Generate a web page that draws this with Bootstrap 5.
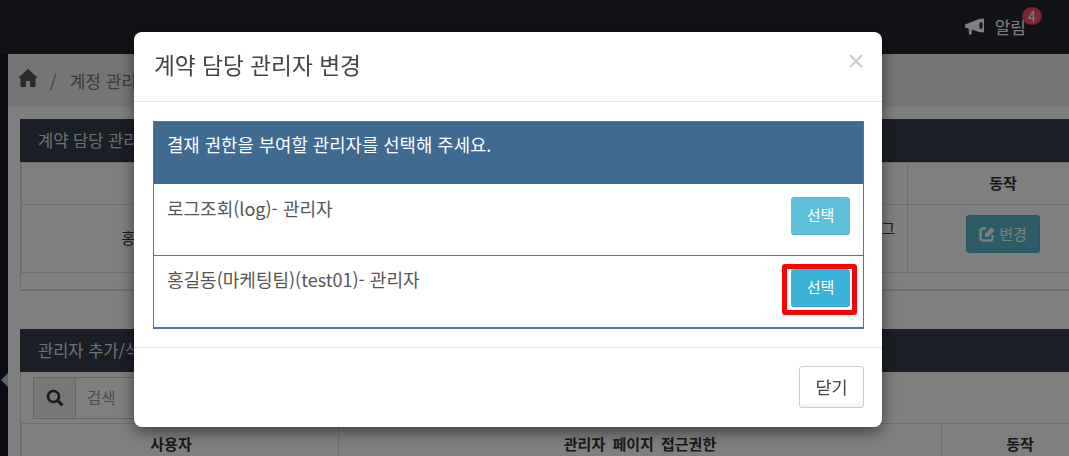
<!DOCTYPE html>
<html lang="ko">
<head>
    <meta charset="UTF-8">
    <meta name="viewport" content="width=device-width, initial-scale=1.0">
    <title>계약 담당 관리자 변경</title>
    <link href="https://cdn.jsdelivr.net/npm/bootstrap@5.3.2/dist/css/bootstrap.min.css" rel="stylesheet">
    <style>
        html, body { height: 100%; overflow: hidden; }
        body { font-family: "Noto Sans CJK KR", "Noto Sans", sans-serif; font-size: 15px; color: #333; background: #fff; }

        .top-bar { height: 54px; background: #24262f; padding: 0 43px 0 0; }
        .alarm-link { position: relative; color: #fff; font-size: 17px; gap: 10px; padding-bottom: 1px; }
        .alarm-badge { position: absolute; top: -7px; right: -16px; width: 20px; height: 18px; line-height: 18px; padding: 0; border-radius: 50%; background: #f05068; font-size: 14px; font-weight: 400; }

        .page-wrap { height: 402px; }
        .side-strip { width: 8px; background: #181c28; flex: none; position: relative; }
        .side-arrow { position: absolute; left: 1px; top: 319px; width: 0; height: 0; border-top: 7px solid transparent; border-bottom: 7px solid transparent; border-right: 7px solid #a9cde8; }
        .main-area { overflow: hidden; background: #fff; }

        .crumb-bar { height: 53px; background: #eaeaea; padding: 0 10px; gap: 12px; color: #777; font-size: 17px; margin-bottom: 12px; white-space: nowrap; }
        .crumb-bar svg { flex: none; margin-bottom: 5px; }
        .crumb-sep { margin-right: 1px; }

        .box-panel { margin: 0 -30px 38px 12px; border: 0; border-left: 1px solid #ddd; border-bottom: 2px solid #ddd; padding-bottom: 16px; border-radius: 0; background: #fff; }
        .box-panel .card-header { height: 43px; margin-left: -1px; background: #343e4e; color: #e0e0e0; font-size: 16.5px; border: 0; border-radius: 0; padding: 0 18px; line-height: 42px; }
        .box-table { margin: 0; table-layout: fixed; border-color: #ddd; text-align: center; color: #333; }
        .box-table th { height: 42px; vertical-align: middle; padding: 0 8px; font-weight: 700; font-size: 15px; word-spacing: 3px; }
        .box-table td { height: 68px; vertical-align: middle; padding: 0 8px; }
        .box-table .cell-log { vertical-align: top; text-align: right; padding: 12px 12px 0 0; }
        .box-table .cell-act { vertical-align: top; padding-top: 10px; }
        .box-table .th-user { padding-right: 26px; }
        .w-name { width: 294px; }
        .w-mid { width: 376px; }
        .w-log { width: 216px; }
        .w-user { width: 317px; }
        .w-auth { width: 603px; }

        .edit-btn { background: #5ab8d0; border-color: #4aa8c4; color: #fff; width: 74px; height: 38px; padding: 0; font-size: 15px; border-radius: 3px; gap: 3px; }

        .search-row { margin: 5px 0 4px 12px; width: 330px; height: 42px; }
        .search-row .input-group-text { width: 43px; background: #eee; border-color: #ccc; border-radius: 0; padding: 0; justify-content: center; }
        .search-row .form-control { border-color: #ccc; border-radius: 0; font-size: 15.5px; padding-left: 11px; }
        .search-row .form-control::placeholder { color: #999; }
        .panel-second { padding-bottom: 0; border-bottom: 0; }
        .panel-second .box-table { border-top: 1px solid #ddd; }

        .picker-dialog { max-width: 748px; width: 748px; margin: 32px 0 0 134px; }
        .picker-content { height: 395px; border: 0; border-radius: 8px; box-shadow: 0 5px 15px rgba(0,0,0,.5); }
        .picker-content .modal-header { height: 70px; padding: 0 19px 0 20px; border-bottom: 1px solid #e5e5e5; align-items: flex-start; }
        .picker-title { font-size: 22.7px; line-height: 66px; font-weight: 400; color: #444; }
        .close-x { background: none; border: 0; padding: 0; margin-top: 14px; margin-right: 0; line-height: 1; height: 28px; }
        .picker-body { padding: 19px 18px 0 19px; height: 245px; flex: none; }
        .picker-panel { --bs-card-border-color: #4a7aa3; border: 1px solid #4a7aa3; border-bottom-width: 2px; border-radius: 0; }
        .picker-panel .card-header { height: 62px; background: #406a90; color: #fff; border: 0; border-radius: 0; padding: 10px 13px; font-size: 17.8px; line-height: 24px; }
        .list-group-flush > .picker-row { height: 72px; padding: 13px 13px 0 13px; border: 0; border-top: 1px solid #4a7aa3; border-radius: 0; color: #555; font-size: 18px; line-height: 24px; }
        .list-group-flush > .picker-row > span:first-child { margin-top: -2px; }
        .list-group-flush > .picker-row:first-child { border-top: 0; height: 71px; }
        .list-group-flush > .picker-row:first-child > span:first-child { margin-top: -1px; }
        .pick-hold { position: relative; display: inline-block; line-height: 0; }
        .pick-btn { width: 59px; height: 38px; padding: 0; font-size: 15px; color: #fff; border: 0; border-bottom: 1px solid #2aa0c4; border-radius: 3px; background: #39b3d7; }
        .pick-btn-soft { background: #5fc0dc; border-bottom-color: #4fb0cc; }
        .pick-mark { position: absolute; left: -9px; right: -7px; top: 0; bottom: -8px; margin-top: -5px; border: 5px solid #f00; border-radius: 3px; pointer-events: none; }
        .picker-content .modal-footer { height: 81px; padding: 0 18px 0 0; border-top: 1px solid #e5e5e5; align-items: flex-start; margin-top: 0; }
        .done-btn { width: 65px; height: 42px; margin: 18px 0 0; padding: 0; font-size: 17.5px; color: #444; background: linear-gradient(#fff 85%, #f0f0f0); border: 1px solid #ccc; border-radius: 3px; }
    </style>
</head>
<body>

<nav class="navbar top-bar justify-content-end">
    <a class="alarm-link d-flex align-items-center text-decoration-none" href="#">
        <svg width="20" height="18" viewBox="0 0 20 18" fill="#fff">
            <path d="M0 6.5 L14 1 L19 0.5 L19 14.5 L14 14 L7 11.5 L6.5 16.5 L4 16.5 L3.6 10.5 L0 9.5 Z"/>
            <ellipse cx="16" cy="7.5" rx="1.6" ry="3.6" fill="#24262f"/>
        </svg>
        <span>알림</span>
        <span class="badge alarm-badge">4</span>
    </a>
</nav>

<div class="page-wrap d-flex">
    <div class="side-strip"><span class="side-arrow"></span></div>
    <div class="main-area flex-grow-1">
        <div class="crumb-bar d-flex align-items-center">
            <svg width="20" height="18" viewBox="0 0 20 18" fill="#555">
                <path d="M10 0 L20 9 L17.5 9 L17.5 18 L12 18 L12 12 L8 12 L8 18 L2.5 18 L2.5 9 L0 9 Z"/>
            </svg>
            <span class="crumb-sep">/</span>
            <span>계정 관리</span>
        </div>

        <div class="card box-panel">
            <div class="card-header">계약 담당 관리자</div>
            <table class="table table-bordered box-table">
                <colgroup><col class="w-name"><col class="w-mid"><col class="w-log"><col></colgroup>
                <thead><tr><th>사용자</th><th>부서</th><th>권한</th><th>동작</th></tr></thead>
                <tbody>
                    <tr>
                        <td>홍길동(test01)</td>
                        <td>마케팅팀</td>
                        <td class="cell-log">접속 로그</td>
                        <td class="cell-act">
                            <button class="btn edit-btn d-inline-flex align-items-center justify-content-center">
                                <svg width="17" height="16" viewBox="0 0 17 16">
                                    <path d="M7 2.5 H4 A2.5 2.5 0 0 0 1.5 5 V12 A2.5 2.5 0 0 0 4 14.5 H11 A2.5 2.5 0 0 0 13.5 12 V9" fill="none" stroke="#fff" stroke-width="2.4"/>
                                    <path d="M6 8 L12.5 1.2 L15.8 4.4 L9 11 L6 11 Z" fill="#fff"/>
                                </svg>
                                변경
                            </button>
                        </td>
                    </tr>
                </tbody>
            </table>
        </div>

        <div class="card box-panel panel-second">
            <div class="card-header">관리자 추가/삭제</div>
            <div class="input-group search-row">
                <span class="input-group-text">
                    <svg width="18" height="18" viewBox="0 0 18 18" fill="none" stroke="#333">
                        <circle cx="7.5" cy="7.5" r="5.5" stroke-width="2.6"/>
                        <path d="M11.5 11.5 L16.5 16.5" stroke-width="3"/>
                    </svg>
                </span>
                <input class="form-control" type="text" placeholder="검색">
            </div>
            <table class="table table-bordered box-table">
                <colgroup><col class="w-user"><col class="w-auth"><col></colgroup>
                <thead><tr><th class="th-user">사용자</th><th>관리자 페이지 접근권한</th><th>동작</th></tr></thead>
            </table>
        </div>
    </div>
</div>

<div class="modal-backdrop show"></div>

<div class="modal d-block">
    <div class="modal-dialog picker-dialog">
        <div class="modal-content picker-content">
            <div class="modal-header">
                <h4 class="modal-title picker-title">계약 담당 관리자 변경</h4>
                <button type="button" class="close-x" aria-label="Close">
                    <svg width="14" height="14" viewBox="0 0 14 14" stroke="#ccc" stroke-width="2.2">
                        <path d="M1 1 L13 13 M13 1 L1 13"/>
                    </svg>
                </button>
            </div>
            <div class="modal-body picker-body">
                <div class="card picker-panel">
                    <div class="card-header">결재 권한을 부여할 관리자를 선택해 주세요.</div>
                    <ul class="list-group list-group-flush">
                        <li class="list-group-item picker-row d-flex justify-content-between align-items-start">
                            <span>로그조회(log)- 관리자</span>
                            <button class="btn pick-btn pick-btn-soft">선택</button>
                        </li>
                        <li class="list-group-item picker-row d-flex justify-content-between align-items-start">
                            <span>홍길동(마케팅팀)(test01)- 관리자</span>
                            <span class="pick-hold">
                                <button class="btn pick-btn">선택</button>
                                <span class="pick-mark"></span>
                            </span>
                        </li>
                    </ul>
                </div>
            </div>
            <div class="modal-footer">
                <button class="btn done-btn">닫기</button>
            </div>
        </div>
    </div>
</div>

</body>
</html>
